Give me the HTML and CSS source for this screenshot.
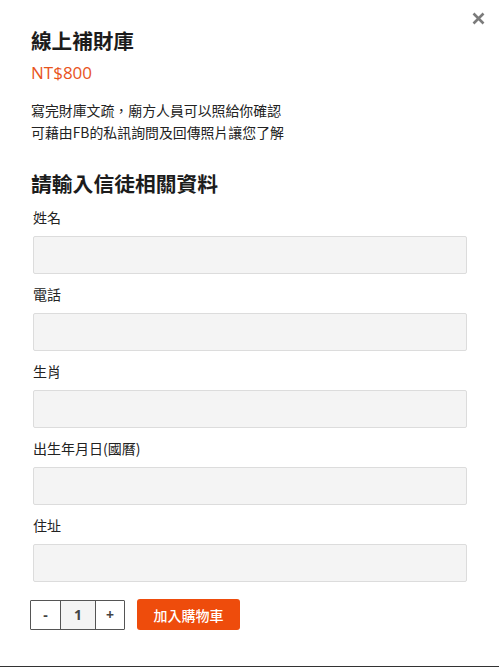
FILE: index.html
```html
<!DOCTYPE html>
<html lang="zh-Hant">
<head>
<meta charset="utf-8">
<title>線上補財庫</title>
<link rel="stylesheet" href="styles.css">
</head>
<body>
<div class="modal">
  <button class="close" aria-label="close">
    <svg width="13" height="13" viewBox="0 0 13 13"><path d="M1.5 1.5 L11.5 11.5 M11.5 1.5 L1.5 11.5" stroke="#7b7b7b" stroke-width="2.6" stroke-linecap="butt"/></svg>
  </button>
  <h1 class="title">線上補財庫</h1>
  <div class="price">NT$800</div>
  <p class="desc">寫完財庫文疏，廟方人員可以照給你確認<br>可藉由FB的私訊詢問及回傳照片讓您了解</p>
  <h2 class="subtitle">請輸入信徒相關資料</h2>
  <form class="form">
    <label class="field"><span class="label">姓名</span><input class="input" type="text"></label>
    <label class="field"><span class="label">電話</span><input class="input" type="text"></label>
    <label class="field"><span class="label">生肖</span><input class="input" type="text"></label>
    <label class="field"><span class="label">出生年月日(國曆)</span><input class="input" type="text"></label>
    <label class="field"><span class="label">住址</span><input class="input" type="text"></label>
  </form>
  <div class="actions">
    <div class="qty">
      <span class="qty-btn minus">-</span>
      <span class="qty-val">1</span>
      <span class="qty-btn plus">+</span>
    </div>
    <button class="cart">加入購物車</button>
  </div>
</div>
</body>
</html>
```
FILE: styles.css
```css
html, body {
  margin: 0;
  padding: 0;
  background: #fff;
}
body {
  font-family: "Noto Sans CJK TC", "Noto Sans", sans-serif;
  color: #222;
}
.modal {
  position: relative;
  box-sizing: border-box;
  height: 667px;
  border-bottom: 1px solid #333;
  padding: 27px 32px 0 30px;
}
.close {
  position: absolute;
  top: 12px;
  right: 14px;
  border: 0;
  background: none;
  padding: 0;
  width: 13px;
  height: 13px;
  display: flex;
}
.title {
  margin: 0 0 0 1px;
  font-size: 20.6px;
  line-height: 26px;
  font-weight: 700;
  color: #1c1c1c;
}
.price {
  margin: 8px 0 0 1px;
  font-family: "Open Sans", "Noto Sans", sans-serif;
  font-size: 17px;
  line-height: 24px;
  color: #e8541c;
}
.desc {
  margin: 14px 0 0 1px;
  font-size: 13.9px;
  line-height: 22px;
  color: #222;
}
.subtitle {
  margin: 27px 0 0 1px;
  font-size: 20.8px;
  line-height: 26px;
  font-weight: 700;
  color: #1c1c1c;
}
.form {
  margin: 10px 0 0 3px;
  display: flex;
  flex-direction: column;
  gap: 9px;
}
.field {
  display: flex;
  flex-direction: column;
  gap: 8px;
}
.label {
  font-size: 14px;
  line-height: 22px;
  color: #222;
}
.input {
  box-sizing: border-box;
  height: 38px;
  width: 100%;
  margin: 0;
  border: 1px solid #dcdcdc;
  border-radius: 2px;
  background: #f4f4f4;
}
.actions {
  margin-top: 17px;
  display: flex;
  align-items: center;
  gap: 12px;
}
.qty {
  display: flex;
  height: 30px;
  box-sizing: border-box;
  border: 1px solid #555;
  border-radius: 1px;
}
.qty-btn, .qty-val {
  display: flex;
  align-items: center;
  justify-content: center;
  font-family: "Open Sans", "Noto Sans", sans-serif;
  font-weight: 700;
  font-size: 14px;
  color: #444;
}
.minus {
  width: 29px;
  border-right: 1px solid #555;
}
.qty-val {
  width: 34px;
  background: #f4f4f4;
  border-right: 1px solid #555;
}
.plus {
  width: 28px;
}
.cart {
  height: 31px;
  width: 103px;
  padding: 0;
  border: 0;
  border-radius: 3px;
  background: #ee4c0c;
  color: #fff;
  font-family: "Noto Sans CJK TC", "Noto Sans", sans-serif;
  font-size: 14px;
  font-weight: 500;
}
```
